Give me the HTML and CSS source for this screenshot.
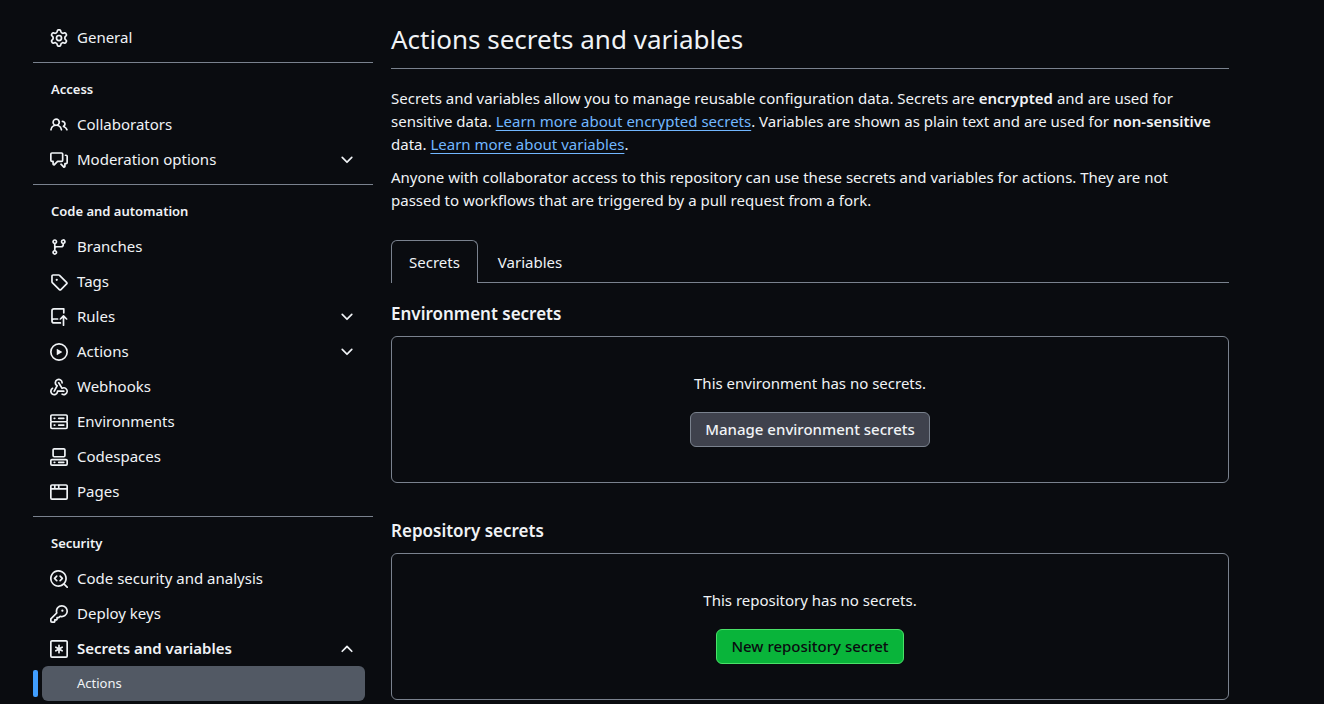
FILE: index.html
```html
<!DOCTYPE html>
<html lang="en">
<head>
<meta charset="utf-8">
<title>Actions secrets and variables</title>
<link rel="stylesheet" href="styles.css">
</head>
<body>
<svg class="sprite" aria-hidden="true">
  <symbol id="gear" viewBox="0 0 16 16"><path d="M8 0a8.2 8.2 0 0 1 .701.031C9.444.095 9.99.645 10.16 1.29l.288 1.107c.018.066.079.158.212.224.231.114.454.243.668.386.123.082.233.09.299.071l1.103-.303c.644-.176 1.392.021 1.82.63.27.385.506.792.704 1.218.315.675.111 1.422-.364 1.891l-.814.806c-.049.048-.098.147-.088.294.016.257.016.515 0 .772-.01.147.038.246.088.294l.814.806c.475.469.679 1.216.364 1.891a7.977 7.977 0 0 1-.704 1.217c-.428.61-1.176.807-1.82.63l-1.102-.302c-.067-.019-.177-.011-.3.071a5.909 5.909 0 0 1-.668.386c-.133.066-.194.158-.211.224l-.29 1.106c-.168.646-.715 1.196-1.458 1.26a8.006 8.006 0 0 1-1.402 0c-.743-.064-1.289-.614-1.458-1.26l-.289-1.106c-.018-.066-.079-.158-.212-.224a5.738 5.738 0 0 1-.668-.386c-.123-.082-.233-.09-.299-.071l-1.103.303c-.644.176-1.392-.021-1.82-.63a8.12 8.12 0 0 1-.704-1.218c-.315-.675-.111-1.422.363-1.891l.815-.806c.05-.048.098-.147.088-.294a6.214 6.214 0 0 1 0-.772c.01-.147-.038-.246-.088-.294l-.815-.806C.635 6.045.431 5.298.746 4.623a7.92 7.92 0 0 1 .704-1.217c.428-.61 1.176-.807 1.82-.63l1.102.302c.067.019.177.011.3-.071.214-.143.437-.272.668-.386.133-.066.194-.158.211-.224l.29-1.106C6.009.645 6.556.095 7.299.03 7.53.01 7.764 0 8 0Zm-.571 1.525c-.036.003-.108.036-.137.146l-.289 1.105c-.147.561-.549.967-.998 1.189-.173.086-.34.183-.5.29-.417.278-.97.423-1.529.27l-1.103-.303c-.109-.03-.175.016-.195.045-.22.312-.412.644-.573.99-.014.031-.021.11.059.19l.815.806c.411.406.562.957.53 1.456a4.709 4.709 0 0 0 0 .582c.032.499-.119 1.05-.53 1.456l-.815.806c-.081.08-.073.159-.059.19.162.346.353.677.573.989.02.03.085.076.195.046l1.102-.303c.56-.153 1.113-.008 1.53.27.161.107.328.204.501.29.447.222.85.629.997 1.189l.289 1.105c.029.109.101.143.137.146a6.6 6.6 0 0 0 1.142 0c.036-.003.108-.036.137-.146l.289-1.105c.147-.561.549-.967.998-1.189.173-.086.34-.183.5-.29.417-.278.97-.423 1.529-.27l1.103.303c.109.029.175-.016.195-.045.22-.313.411-.644.573-.99.014-.031.021-.11-.059-.19l-.815-.806c-.411-.406-.562-.957-.53-1.456a4.709 4.709 0 0 0 0-.582c-.032-.499.119-1.05.53-1.456l.815-.806c.081-.08.073-.159.059-.19a6.464 6.464 0 0 0-.573-.989c-.02-.03-.085-.076-.195-.046l-1.102.303c-.56.153-1.113.008-1.53-.27a4.44 4.44 0 0 0-.501-.29c-.447-.222-.85-.629-.997-1.189l-.289-1.105c-.029-.11-.101-.143-.137-.146a6.6 6.6 0 0 0-1.142 0ZM11 8a3 3 0 1 1-6 0 3 3 0 0 1 6 0ZM9.5 8a1.5 1.5 0 1 0-3.001.001A1.5 1.5 0 0 0 9.5 8Z"/></symbol>
  <symbol id="people" viewBox="0 0 16 16"><path d="M2 5.5a3.5 3.5 0 1 1 5.898 2.549 5.508 5.508 0 0 1 3.034 4.084.75.75 0 1 1-1.482.235 4 4 0 0 0-7.9 0 .75.75 0 0 1-1.482-.236A5.507 5.507 0 0 1 3.102 8.05 3.493 3.493 0 0 1 2 5.5ZM11 4a3.001 3.001 0 0 1 2.22 5.018 5.01 5.01 0 0 1 2.56 3.012.749.749 0 0 1-.885.954.752.752 0 0 1-.549-.514 3.507 3.507 0 0 0-2.522-2.372.75.75 0 0 1-.574-.73v-.352a.75.75 0 0 1 .416-.672A1.5 1.5 0 0 0 11 5.5.75.75 0 0 1 11 4Zm-5.5-.5a2 2 0 1 0-.001 3.999A2 2 0 0 0 5.5 3.5Z"/></symbol>
  <symbol id="discussion" viewBox="0 0 16 16"><path d="M1.75 1h8.5c.966 0 1.75.784 1.75 1.75v5.5A1.75 1.75 0 0 1 10.25 10H7.061l-2.574 2.573A1.458 1.458 0 0 1 2 11.543V10h-.25A1.75 1.75 0 0 1 0 8.25v-5.5C0 1.784.784 1 1.75 1ZM1.5 2.75v5.5c0 .138.112.25.25.25h1a.75.75 0 0 1 .75.75v2.19l2.72-2.72a.749.749 0 0 1 .53-.22h3.5a.25.25 0 0 0 .25-.25v-5.5a.25.25 0 0 0-.25-.25h-8.5a.25.25 0 0 0-.25.25Zm13 2a.25.25 0 0 0-.25-.25h-.5a.75.75 0 0 1 0-1.5h.5c.966 0 1.75.784 1.75 1.75v5.5A1.75 1.75 0 0 1 14.25 12H14v1.543a1.458 1.458 0 0 1-2.487 1.03L9.22 12.28a.749.749 0 0 1 .326-1.275.749.749 0 0 1 .734.215l2.22 2.22v-2.19a.75.75 0 0 1 .75-.75h1a.25.25 0 0 0 .25-.25Z"/></symbol>
  <symbol id="branch" viewBox="0 0 16 16"><path d="M9.5 3.25a2.25 2.25 0 1 1 3 2.122V6A2.5 2.5 0 0 1 10 8.5H6a1 1 0 0 0-1 1v1.128a2.251 2.251 0 1 1-1.5 0V5.372a2.25 2.25 0 1 1 1.5 0v1.836A2.493 2.493 0 0 1 6 7h4a1 1 0 0 0 1-1v-.628A2.25 2.25 0 0 1 9.5 3.25Zm-6 0a.75.75 0 1 0 1.5 0 .75.75 0 0 0-1.5 0Zm8.25-.75a.75.75 0 1 0 0 1.5.75.75 0 0 0 0-1.5ZM4.25 12a.75.75 0 1 0 0 1.5.75.75 0 0 0 0-1.5Z"/></symbol>
  <symbol id="tag" viewBox="0 0 16 16"><path d="M1 7.775V2.75C1 1.784 1.784 1 2.75 1h5.025c.464 0 .91.184 1.238.513l6.25 6.25a1.75 1.75 0 0 1 0 2.474l-5.026 5.026a1.75 1.75 0 0 1-2.474 0l-6.25-6.25A1.752 1.752 0 0 1 1 7.775Zm1.5 0c0 .066.026.13.073.177l6.25 6.25a.25.25 0 0 0 .354 0l5.025-5.025a.25.25 0 0 0 0-.354l-6.25-6.25a.25.25 0 0 0-.177-.073H2.75a.25.25 0 0 0-.25.25ZM6 5a1 1 0 1 1 0 2 1 1 0 0 1 0-2Z"/></symbol>
  <symbol id="push" viewBox="0 0 16 16"><path d="M1 2.5A2.5 2.5 0 0 1 3.5 0h8.75a.75.75 0 0 1 .75.75v3.5a.75.75 0 0 1-1.5 0V1.5h-8a1 1 0 0 0-1 1v6.708A2.493 2.493 0 0 1 3.5 9h3.25a.75.75 0 0 1 0 1.5H3.5a1 1 0 0 0 0 2h5.75a.75.75 0 0 1 0 1.5H3.5A2.5 2.5 0 0 1 1 11.5Zm13.23 7.79-1.48-1.481v6.44a.75.75 0 0 1-1.5 0v-6.44L9.77 10.29a.749.749 0 0 1-1.275-.326.749.749 0 0 1 .215-.734l2.76-2.76a.75.75 0 0 1 1.06 0l2.76 2.76a.749.749 0 0 1-.326 1.275.749.749 0 0 1-.734-.215Z"/></symbol>
  <symbol id="play" viewBox="0 0 16 16"><path d="M8 0a8 8 0 1 1 0 16A8 8 0 0 1 8 0ZM1.5 8a6.5 6.5 0 1 0 13 0 6.5 6.5 0 0 0-13 0Zm4.879-2.773 4.264 2.559a.25.25 0 0 1 0 .428l-4.264 2.559A.25.25 0 0 1 6 10.559V5.442a.25.25 0 0 1 .379-.215Z"/></symbol>
  <symbol id="webhook" viewBox="0 0 16 16"><path d="M5.5 4.25a2.25 2.25 0 0 1 4.5 0 .75.75 0 0 0 1.5 0 3.75 3.75 0 1 0-6.14 2.889l-2.272 4.258a.75.75 0 0 0 1.324.706L7 7.25a.75.75 0 0 0-.309-1.015A2.25 2.25 0 0 1 5.5 4.25Z"/><path d="M7.364 3.607a.75.75 0 0 1 1.03.257l2.608 4.349a3.75 3.75 0 1 1-.628 6.785.75.75 0 0 1 .752-1.299 2.25 2.25 0 1 0-.033-3.88.75.75 0 0 1-1.03-.256L7.107 4.636a.75.75 0 0 1 .257-1.03Z"/><path d="M2.9 8.776A.75.75 0 0 1 2.625 9.8 2.25 2.25 0 1 0 6 11.75a.75.75 0 0 1 .75-.751h5.5a.75.75 0 0 1 0 1.5H7.425a3.751 3.751 0 1 1-5.55-3.998.75.75 0 0 1 1.024.274Z"/></symbol>
  <symbol id="server" viewBox="0 0 16 16"><path d="M1.75 1h12.5c.966 0 1.75.784 1.75 1.75v4c0 .372-.116.717-.314 1 .198.283.314.628.314 1v4a1.75 1.75 0 0 1-1.75 1.75H1.75A1.75 1.75 0 0 1 0 12.75v-4c0-.358.109-.707.314-1a1.739 1.739 0 0 1-.314-1v-4C0 1.784.784 1 1.75 1ZM1.5 2.75v4c0 .138.112.25.25.25h12.5a.25.25 0 0 0 .25-.25v-4a.25.25 0 0 0-.25-.25H1.75a.25.25 0 0 0-.25.25Zm.25 5.75a.25.25 0 0 0-.25.25v4c0 .138.112.25.25.25h12.5a.25.25 0 0 0 .25-.25v-4a.25.25 0 0 0-.25-.25ZM7 4.75A.75.75 0 0 1 7.75 4h4.5a.75.75 0 0 1 0 1.5h-4.5A.75.75 0 0 1 7 4.75ZM7.75 10h4.5a.75.75 0 0 1 0 1.5h-4.5a.75.75 0 0 1 0-1.5ZM3 4.75A.75.75 0 0 1 3.75 4h.5a.75.75 0 0 1 0 1.5h-.5A.75.75 0 0 1 3 4.75ZM3.75 10h.5a.75.75 0 0 1 0 1.5h-.5a.75.75 0 0 1 0-1.5Z"/></symbol>
  <symbol id="codespaces" viewBox="0 0 16 16"><path d="M0 11.25c0-.966.784-1.75 1.75-1.75h12.5c.966 0 1.75.784 1.75 1.75v3A1.75 1.75 0 0 1 14.25 16H1.75A1.75 1.75 0 0 1 0 14.25Zm2-9.5C2 .784 2.784 0 3.75 0h8.5C13.216 0 14 .784 14 1.75v5a1.75 1.75 0 0 1-1.75 1.75h-8.5A1.75 1.75 0 0 1 2 6.75Zm1.75-.25a.25.25 0 0 0-.25.25v5c0 .138.112.25.25.25h8.5a.25.25 0 0 0 .25-.25v-5a.25.25 0 0 0-.25-.25Zm-2 9.5a.25.25 0 0 0-.25.25v3c0 .138.112.25.25.25h12.5a.25.25 0 0 0 .25-.25v-3a.25.25 0 0 0-.25-.25Z"/><path d="M7 12.75a.75.75 0 0 1 .75-.75h4.5a.75.75 0 0 1 0 1.5h-4.5a.75.75 0 0 1-.75-.75Zm-4 0a.75.75 0 0 1 .75-.75h.5a.75.75 0 0 1 0 1.5h-.5a.75.75 0 0 1-.75-.75Z"/></symbol>
  <symbol id="browser" viewBox="0 0 16 16"><path d="M0 2.75C0 1.784.784 1 1.75 1h12.5c.966 0 1.75.784 1.75 1.75v10.5A1.75 1.75 0 0 1 14.25 15H1.75A1.75 1.75 0 0 1 0 13.25ZM14.5 6h-13v7.25c0 .138.112.25.25.25h12.5a.25.25 0 0 0 .25-.25Zm-6-3.5v2h6V2.75a.25.25 0 0 0-.25-.25ZM5 2.5v2h2v-2Zm-3.25 0a.25.25 0 0 0-.25.25V4.5h2v-2Z"/></symbol>
  <symbol id="codescan" viewBox="0 0 16 16"><path d="M8.47 4.97a.75.75 0 0 0 0 1.06L9.94 7.5 8.47 8.97a.75.75 0 1 0 1.06 1.06l2-2a.75.75 0 0 0 0-1.06l-2-2a.75.75 0 0 0-1.06 0ZM6.53 6.03a.75.75 0 0 0-1.06-1.06l-2 2a.75.75 0 0 0 0 1.06l2 2a.75.75 0 1 0 1.06-1.06L5.06 7.5l1.47-1.47Z"/><path d="M12.246 13.307a7.501 7.501 0 1 1 1.06-1.06l2.474 2.473a.749.749 0 0 1-.326 1.275.749.749 0 0 1-.734-.215ZM1.5 7.5a6.002 6.002 0 0 0 3.608 5.504 6.002 6.002 0 0 0 6.486-1.117.748.748 0 0 1 .292-.293A6 6 0 1 0 1.5 7.5Z"/></symbol>
  <symbol id="key" viewBox="0 0 16 16"><path d="M10.5 0a5.499 5.499 0 1 1-1.288 10.848l-.932.932a.749.749 0 0 1-.53.22H7v.75a.749.749 0 0 1-.22.53l-.5.5a.749.749 0 0 1-.53.22H5v.75a.749.749 0 0 1-.22.53l-.5.5a.749.749 0 0 1-.53.22h-2A1.75 1.75 0 0 1 0 14.25v-2c0-.199.079-.389.22-.53l4.932-4.932A5.5 5.5 0 0 1 10.5 0Zm-4 5.5c-.001.431.069.86.205 1.269a.75.75 0 0 1-.181.768L1.5 12.56v1.69c0 .138.112.25.25.25h1.69l.06-.06v-1.19a.75.75 0 0 1 .75-.75h1.19l.06-.06v-1.19a.75.75 0 0 1 .75-.75h1.19l1.023-1.025a.75.75 0 0 1 .768-.18A4 4 0 1 0 6.5 5.5ZM11 6a1 1 0 1 1 0-2 1 1 0 0 1 0 2Z"/></symbol>
  <symbol id="asterisk" viewBox="0 0 16 16"><path d="M0 1.75C0 .784.784 0 1.75 0h12.5C15.216 0 16 .784 16 1.75v12.5A1.75 1.75 0 0 1 14.25 16H1.75A1.75 1.75 0 0 1 0 14.25Zm1.75-.25a.25.25 0 0 0-.25.25v12.5c0 .138.112.25.25.25h12.5a.25.25 0 0 0 .25-.25V1.75a.25.25 0 0 0-.25-.25ZM8 4a.75.75 0 0 1 .75.75V6.7l1.69-.975a.75.75 0 0 1 .75 1.3L9.5 8l1.69.976a.75.75 0 0 1-.75 1.298L8.75 9.3v1.951a.75.75 0 0 1-1.5 0V9.299l-1.69.976a.75.75 0 0 1-.75-1.3L6.5 8l-1.69-.975a.75.75 0 0 1 .75-1.3l1.69.976V4.75A.75.75 0 0 1 8 4Z"/></symbol>
  <symbol id="down" viewBox="0 0 16 16"><path d="M12.78 5.22a.749.749 0 0 1 0 1.06l-4.25 4.25a.749.749 0 0 1-1.06 0L3.22 6.28a.749.749 0 1 1 1.06-1.06L8 8.939l3.72-3.719a.749.749 0 0 1 1.06 0Z"/></symbol>
  <symbol id="up" viewBox="0 0 16 16"><path d="M3.22 10.53a.749.749 0 0 1 0-1.06l4.25-4.25a.749.749 0 0 1 1.06 0l4.25 4.25a.749.749 0 1 1-1.06 1.06L8 6.811 4.28 10.53a.749.749 0 0 1-1.06 0Z"/></symbol>
</svg>

<div class="layout">
  <nav class="sidebar" aria-label="Settings">
    <ul class="nav-list">
      <li><a class="nav-item" href="#"><svg class="icon"><use href="#gear"/></svg><span class="label">General</span></a></li>
    </ul>
    <section class="nav-group">
      <h2 class="nav-title">Access</h2>
      <ul class="nav-list">
        <li><a class="nav-item" href="#"><svg class="icon"><use href="#people"/></svg><span class="label">Collaborators</span></a></li>
        <li><button class="nav-item" type="button" aria-expanded="false"><svg class="icon"><use href="#discussion"/></svg><span class="label">Moderation options</span><svg class="icon"><use href="#down"/></svg></button></li>
      </ul>
    </section>
    <section class="nav-group">
      <h2 class="nav-title">Code and automation</h2>
      <ul class="nav-list">
        <li><a class="nav-item" href="#"><svg class="icon"><use href="#branch"/></svg><span class="label">Branches</span></a></li>
        <li><a class="nav-item" href="#"><svg class="icon"><use href="#tag"/></svg><span class="label">Tags</span></a></li>
        <li><button class="nav-item" type="button" aria-expanded="false"><svg class="icon"><use href="#push"/></svg><span class="label">Rules</span><svg class="icon"><use href="#down"/></svg></button></li>
        <li><button class="nav-item" type="button" aria-expanded="false"><svg class="icon"><use href="#play"/></svg><span class="label">Actions</span><svg class="icon"><use href="#down"/></svg></button></li>
        <li><a class="nav-item" href="#"><svg class="icon"><use href="#webhook"/></svg><span class="label">Webhooks</span></a></li>
        <li><a class="nav-item" href="#"><svg class="icon"><use href="#server"/></svg><span class="label">Environments</span></a></li>
        <li><a class="nav-item" href="#"><svg class="icon"><use href="#codespaces"/></svg><span class="label">Codespaces</span></a></li>
        <li><a class="nav-item" href="#"><svg class="icon"><use href="#browser"/></svg><span class="label">Pages</span></a></li>
      </ul>
    </section>
    <section class="nav-group">
      <h2 class="nav-title">Security</h2>
      <ul class="nav-list">
        <li><a class="nav-item" href="#"><svg class="icon"><use href="#codescan"/></svg><span class="label">Code security and analysis</span></a></li>
        <li><a class="nav-item" href="#"><svg class="icon"><use href="#key"/></svg><span class="label">Deploy keys</span></a></li>
        <li>
          <button class="nav-item nav-item-open" type="button" aria-expanded="true"><svg class="icon"><use href="#asterisk"/></svg><span class="label">Secrets and variables</span><svg class="icon"><use href="#up"/></svg></button>
          <ul class="sub-list">
            <li><a class="sub-item" href="#" aria-current="page">Actions</a></li>
          </ul>
        </li>
      </ul>
    </section>
  </nav>

  <main class="content">
    <h1 class="page-title">Actions secrets and variables</h1>
    <div class="intro">
      <p>Secrets and variables allow you to manage reusable configuration data. Secrets are <strong>encrypted</strong> and are used for sensitive data. <a href="#">Learn more about encrypted secrets</a>. Variables are shown as plain text and are used for <strong>non-sensitive</strong> data. <a href="#">Learn more about variables</a>.</p>
      <p>Anyone with collaborator access to this repository can use these secrets and variables for actions. They are not passed to workflows that are triggered by a pull request from a fork.</p>
    </div>
    <nav class="tabs" aria-label="Secrets and variables">
      <a class="tab tab-selected" href="#" aria-current="page">Secrets</a>
      <a class="tab" href="#">Variables</a>
    </nav>
    <section class="secrets">
      <h2 class="section-title">Environment secrets</h2>
      <div class="box">
        <p>This environment has no secrets.</p>
        <button class="btn" type="button">Manage environment secrets</button>
      </div>
    </section>
    <section class="secrets">
      <h2 class="section-title">Repository secrets</h2>
      <div class="box">
        <p>This repository has no secrets.</p>
        <button class="btn btn-primary" type="button">New repository secret</button>
      </div>
    </section>
  </main>
</div>
</body>
</html>
```

FILE: styles.css
```css
:root {
  --bg: #0a0c10;
  --text: #f0f3f6;
  --line: #7a828e;
  --link: #71b7ff;
  --accent: #409eff;
}

* {
  box-sizing: border-box;
}

body {
  margin: 0;
  background: var(--bg);
  color: var(--text);
  font-family: "Noto Sans", sans-serif;
  font-size: 15px;
  line-height: 23px;
}

h1, h2, p, ul {
  margin: 0;
  padding: 0;
}

ul {
  list-style: none;
}

button {
  font: inherit;
  color: inherit;
}

.sprite {
  display: none;
}

.layout {
  display: flex;
  gap: 18px;
  padding: 20px 95px 3px 33px;
}

/* Sidebar */

.sidebar {
  flex: 0 0 340px;
}

.nav-group {
  margin-top: 7px;
  border-top: 1px solid var(--line);
  padding-top: 7px;
}

.nav-title {
  padding: 10px 18px 9px;
  font-size: 13px;
  font-weight: 600;
  line-height: 18px;
}

.nav-list {
  padding: 0 8px 0 9px;
}

.nav-item {
  display: flex;
  align-items: center;
  gap: 9px;
  width: 100%;
  padding: 6px 9px 6px 8px;
  border: 0;
  border-radius: 6px;
  background: none;
  color: inherit;
  text-align: left;
  text-decoration: none;
}

.nav-item-open {
  font-weight: 600;
}

.label {
  flex: 1;
}

.icon {
  flex: none;
  width: 18px;
  height: 18px;
  fill: currentColor;
}

.sub-item {
  position: relative;
  display: block;
  padding: 6px 35px;
  border-radius: 6px;
  background: #525964;
  color: inherit;
  font-size: 13px;
  text-decoration: none;
}

.sub-item::before {
  content: "";
  position: absolute;
  top: 4px;
  bottom: 4px;
  left: -9px;
  width: 5px;
  border-radius: 2px;
  background: var(--accent);
}

/* Main column */

.content {
  flex: 1;
  min-width: 0;
}

.page-title {
  padding-bottom: 10px;
  border-bottom: 1px solid var(--line);
  font-size: 26px;
  font-weight: 400;
  line-height: 38px;
}

.intro {
  display: grid;
  gap: 10px;
  max-width: 825px;
  margin-top: 18px;
}

.intro a {
  color: var(--link);
  text-decoration: underline;
  text-decoration-skip-ink: none;
  text-underline-offset: 3px;
}

strong {
  font-weight: 600;
}

.tabs {
  display: flex;
  gap: 2px;
  margin-top: 28px;
  border-bottom: 1px solid var(--line);
}

.tab {
  padding: 10px 17px 8px;
  border: 1px solid transparent;
  border-bottom: 0;
  color: inherit;
  text-decoration: none;
}

.tab-selected {
  margin-bottom: -1px;
  padding-bottom: 9px;
  border-color: var(--line);
  border-radius: 6px 6px 0 0;
  background: var(--bg);
}

.secrets {
  margin-top: 18px;
}

.secrets + .secrets {
  margin-top: 35px;
}

.section-title {
  margin-bottom: 10px;
  font-size: 17px;
  font-weight: 600;
  line-height: 25px;
}

.box {
  display: flex;
  flex-direction: column;
  align-items: center;
  gap: 17px;
  padding: 35px;
  border: 1px solid var(--line);
  border-radius: 6px;
}

.btn {
  padding: 5px 14px;
  border: 1px solid var(--line);
  border-radius: 6px;
  background: #3f424d;
  font-weight: 500;
}

.btn-primary {
  border-color: #4ae168;
  background: #09b43a;
  color: var(--bg);
}
```
